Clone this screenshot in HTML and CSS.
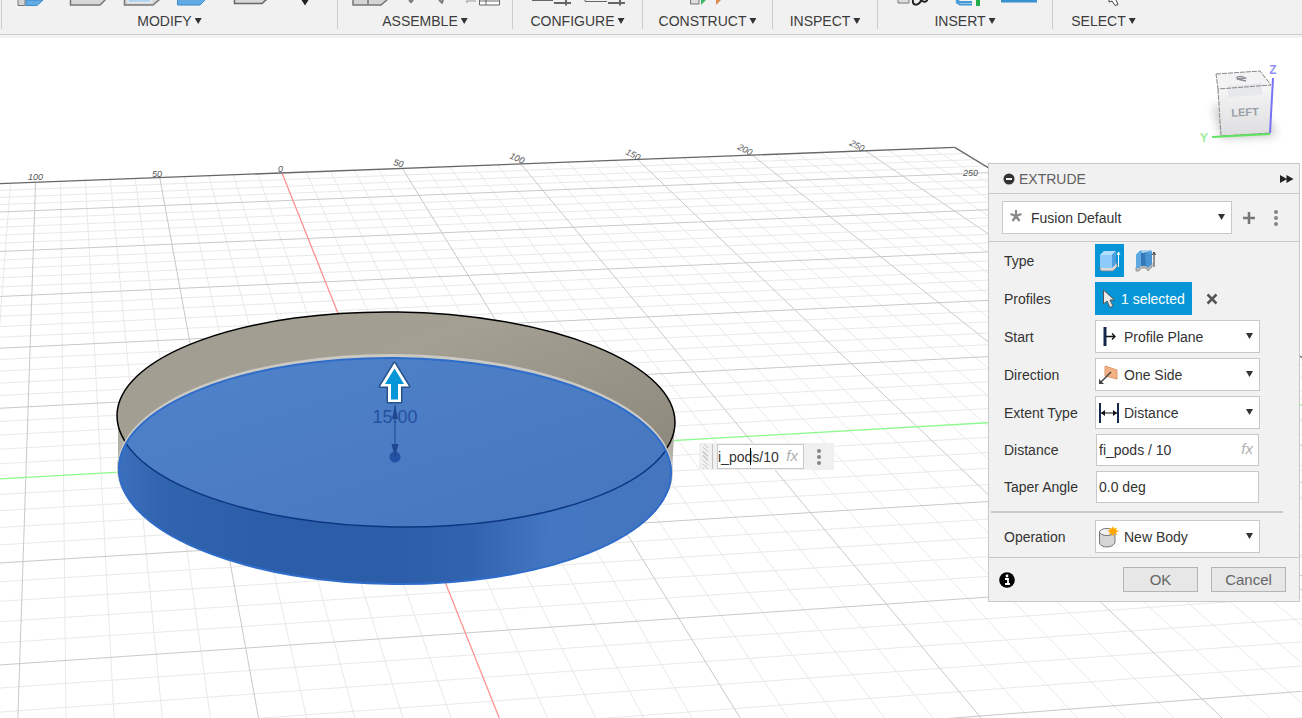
FILE: index.html
```html
<!DOCTYPE html>
<html lang="en">
<head>
    <meta charset="UTF-8">
    <meta name="viewport" content="width=device-width, initial-scale=1.0">
    <title>Extrude</title>
    <link rel="stylesheet" href="styles.css">
</head>
<body>

    <!-- Toolbar -->
    <header class="toolbar">
        <div class="tool-group">
            <svg class="tool-icons" width="335" height="7" viewBox="2 0 335 7">
                <path d="M18 0V5.500H25V0" fill="#d4d4d4" stroke="#777"/>
                <path d="M26 0V5.500H37L43 0Z" fill="#62abe3" stroke="#3b8ccb"/>
                <path d="M70.500 -1V5H100L106 -1" fill="#d8d8d8" stroke="#777" stroke-width="1.500"/>
                <path d="M124.500 -1V5H153L160 -1" fill="#d8d8d8" stroke="#777" stroke-width="1.500"/>
                <path d="M128 0H151V2H128Z" fill="#62abe3" stroke="#fff"/>
                <path d="M177.500 -1V5H200L206 -1" fill="#62abe3" stroke="#3b8ccb"/>
                <path d="M234.500 -1V3.500H262L267 -1" fill="#d8d8d8" stroke="#666" stroke-width="1.500"/>
                <path d="M301.500 0H308.500L305 5.500Z" fill="#222"/>
            </svg>
            <button class="tool-label">MODIFY <span class="caret"></span></button>
        </div>
        <div class="tool-group">
            <svg class="tool-icons" width="174" height="7" viewBox="338 0 174 7">
                <path d="M353 -1V5H381L388 -1M368 -1V5" fill="#d4d4d4" stroke="#777" stroke-width="1.500"/>
                <path d="M409 0L411 2L413 0M439 0L442 2.500L443 0" fill="none" stroke="#777" stroke-width="2"/>
                <path d="M466 1H476M467 1V3" stroke="#999" fill="none"/>
                <path d="M479.500 -1V5H499.500V-1M479 1H500M486 0V5" fill="#fff" stroke="#666"/>
            </svg>
            <button class="tool-label">ASSEMBLE <span class="caret"></span></button>
        </div>
        <div class="tool-group">
            <svg class="tool-icons" width="129" height="7" viewBox="513 0 129 7">
                <path d="M532 .500H553M585 -1V1.500H607" fill="none" stroke="#666"/>
                <path d="M554 3H571M566 0V5.500M608 3H625M620 0V5.500" stroke="#666" stroke-width="2"/>
            </svg>
            <button class="tool-label">CONFIGURE <span class="caret"></span></button>
        </div>
        <div class="tool-group">
            <svg class="tool-icons" width="129" height="7" viewBox="643 0 129 7">
                <path d="M690.500 -1V4H699V-1" fill="#ddd" stroke="#777"/>
                <path d="M701 5V0H706Z" fill="#3db665"/>
                <path d="M716 5V0H721Z" fill="#dd8b50"/>
            </svg>
            <button class="tool-label">CONSTRUCT <span class="caret"></span></button>
        </div>
        <div class="tool-group">
            <svg class="tool-icons" width="104" height="7" viewBox="773 0 104 7"></svg>
            <button class="tool-label">INSPECT <span class="caret"></span></button>
        </div>
        <div class="tool-group">
            <svg class="tool-icons" width="174" height="7" viewBox="878 0 174 7">
                <path d="M898 -1V3H909V-1" fill="#ddd" stroke="#777"/>
                <path d="M913 0C912 6 918 6 921 1M920 -1C924 4 928 1 927 -1" fill="none" stroke="#222" stroke-width="2"/>
                <path d="M956 0L960 2H972M956 2L960 4.500H972" fill="none" stroke="#4599d5" stroke-width="2"/>
                <path d="M976 0H980V6H976Z" fill="#22ad4a"/>
                <path d="M1001 0H1037V2.500H1001Z" fill="#3b92d1"/>
            </svg>
            <button class="tool-label">INSERT <span class="caret"></span></button>
        </div>
        <div class="tool-group last">
            <svg class="tool-icons" width="101" height="7" viewBox="1053 0 101 7">
                <path d="M1109 0V2L1112 1L1115 5.500L1118 4.500L1116 0" fill="#fff" stroke="#444"/>
            </svg>
            <button class="tool-label">SELECT <span class="caret"></span></button>
        </div>
    </header>

    <main class="workspace">

        <!-- 3D view -->
        <svg class="scene" viewBox="0 37 1302 681" preserveAspectRatio="xMinYMin slice">
            <defs>
                <linearGradient id="wall" x1="0" y1="0" x2="1" y2="1">
                    <stop offset="0" stop-color="#a09c90"/>
                    <stop offset=".35" stop-color="#a39f93"/>
                    <stop offset="1" stop-color="#858074"/>
                </linearGradient>
                <linearGradient id="side">
                    <stop offset="0" stop-color="#3c70bd"/>
                    <stop offset=".08" stop-color="#3164ae"/>
                    <stop offset=".28" stop-color="#2b5da8"/>
                    <stop offset=".5" stop-color="#2b5da8"/>
                    <stop offset=".64" stop-color="#3163b0"/>
                    <stop offset=".78" stop-color="#4477c2"/>
                    <stop offset="1" stop-color="#4475be"/>
                </linearGradient>
                <linearGradient id="top" x1="0" y1="0" x2="1" y2="1">
                    <stop offset="0" stop-color="#5083cb"/>
                    <stop offset="1" stop-color="#4676bd"/>
                </linearGradient>
                <linearGradient id="cube" x1="0" y1="0" x2="0" y2="1">
                    <stop offset="0" stop-color="#f6f6f7"/>
                    <stop offset="1" stop-color="#dedee0"/>
                </linearGradient>
                <filter id="soft" x="-30%" y="-30%" width="160%" height="160%">
                    <feGaussianBlur stdDeviation="5"/>
                </filter>
                <clipPath id="rim-clip"><ellipse cx="396" cy="420" rx="279" ry="107" transform="rotate(.8 396 420)"/></clipPath>
                <clipPath id="base-clip"><ellipse cx="395" cy="471" rx="277" ry="113" transform="rotate(.5 395 471)"/></clipPath>
                <clipPath id="upper-clip"><rect x="100" y="300" width="600" height="190"/></clipPath>
            </defs>

            <g id="grid"></g>

            <g class="ruler">
                <text x="28" y="180">100</text>
                <text x="152" y="177">50</text>
                <text x="278" y="172">0</text>
                <text transform="translate(393 165) rotate(14)">50</text>
                <text transform="translate(509 158) rotate(24)">100</text>
                <text transform="translate(625 154) rotate(26)">150</text>
                <text transform="translate(737 149) rotate(26)">200</text>
                <text transform="translate(849 145) rotate(26)">250</text>
                <text x="963" y="176">250</text>
            </g>

            <!-- Disc -->
            <path d="M118 420V471H672L675 420Z" fill="#b3b0a8"/>
            <ellipse cx="396" cy="419" rx="279" ry="107" transform="rotate(.8 396 419)" fill="url(#wall)" stroke="#000" stroke-width="1.500"/>
            <g clip-path="url(#upper-clip)">
                <ellipse cx="395" cy="470" rx="278" ry="116" transform="rotate(.5 395 470)" fill="#cbc9c4"/>
            </g>
            <ellipse cx="395" cy="471" rx="277" ry="113" transform="rotate(.5 395 471)" fill="url(#side)"/>
            <g clip-path="url(#base-clip)">
                <g clip-path="url(#rim-clip)">
                    <rect x="117" y="350" width="560" height="180" fill="url(#top)"/>
                </g>
                <ellipse cx="396" cy="420" rx="279" ry="107" transform="rotate(.8 396 420)" fill="none" stroke="#0c3681" stroke-width="1.500"/>
            </g>
            <ellipse cx="395" cy="471" rx="276" ry="113" transform="rotate(.5 395 471)" fill="none" stroke="#2f6dca" stroke-width="2"/>

            <!-- Distance manipulator -->
            <circle cx="395" cy="457" r="5.500" fill="#2450a5"/>
            <path d="M395 405V457" stroke="#234d97" stroke-width="1.200"/>
            <path d="M395 405L398 419H392ZM395 457L391.500 444H398.500Z" fill="#1e478f"/>
            <text class="dimension" x="395" y="423">15.00</text>
            <path d="M394.500 363L409 386.500H401V402H388V386.500H380Z" fill="#fff" stroke="#24508c" stroke-width="3" stroke-linejoin="round" paint-order="stroke"/>
            <path d="M394.500 368.500L404 384H398V399.500H391V384H385Z" fill="#0696d7"/>
        </svg>

        <!-- View cube -->
        <svg class="view-cube" width="90" height="90" viewBox="1195 60 90 90">
            <path d="M1213 105L1222 138L1276 136L1270 120Z" fill="#999" opacity=".55" filter="url(#soft)"/>
            <path d="M1216 74L1260 71L1271 85L1218 89Z" fill="#f3f3f4"/>
            <path d="M1217 88L1271 85L1270 133L1221 136Z" fill="url(#cube)"/>
            <path d="M1228 86L1262 83V95L1228 97Z" fill="#e6e8ec"/>
            <path d="M1216 74L1260 71L1271 85L1218 89ZM1218 89L1221 136L1270 133" fill="none" stroke="#888" stroke-dasharray="5 1"/>
            <path d="M1236 78Q1240 75 1245 78L1237 79L1246 81" fill="none" stroke="#8b8e94" stroke-width="1.500"/>
            <path d="M1212 137L1270 134" stroke="#5fe35f" stroke-width="2"/>
            <path d="M1273 78L1270 133" stroke="#7773f2" stroke-width="2"/>
            <text class="face" x="1245" y="116" transform="rotate(-3 1245 112)">LEFT</text>
            <text class="axis-y" x="1204" y="142">Y</text>
            <text class="axis-z" x="1273" y="74">Z</text>
        </svg>

        <!-- In-canvas input -->
        <div class="mini-input">
            <span class="grip"></span>
            <div class="mini-field">
                <input type="text" value="i_pods/10" aria-label="Distance value">
                <span class="text-cursor"></span>
                <span class="fx">fx</span>
            </div>
            <button class="dots" aria-label="More options"><i></i><i></i><i></i></button>
        </div>

        <!-- Extrude panel -->
        <form class="panel">
            <div class="panel-header">
                <svg width="12" height="12" viewBox="0 0 12 12"><circle cx="6" cy="6" r="5.500" fill="#333"/><path d="M3 6H9" stroke="#f1f1f1" stroke-width="2"/></svg>
                <h2>EXTRUDE</h2>
                <svg class="expand" width="14" height="8" viewBox="0 0 14 8"><path d="M0 0L7 4L0 8ZM6.500 0L13.500 4L6.500 8Z" fill="#222"/></svg>
            </div>

            <div class="preset">
                <div class="dropdown preset-dropdown">
                    <svg class="dropdown-icon" width="14" height="14" viewBox="0 0 14 14"><path d="M7 1V7M7 7L1.500 5M7 7L12.500 5M7 7L3.500 12M7 7L10.500 12" stroke="#888" stroke-width="2.200"/></svg>
                    <select aria-label="Preset"><option>Fusion Default</option></select>
                    <span class="caret"></span>
                </div>
                <button type="button" class="add" aria-label="Add preset">
                    <svg width="14" height="14" viewBox="0 0 14 14"><path d="M7 1V13M1 7H13" stroke="#777" stroke-width="2.500"/></svg>
                </button>
                <button type="button" class="dots" aria-label="Preset options"><i></i><i></i><i></i></button>
            </div>

            <div class="fields">
                <div class="field">
                    <span class="field-label">Type</span>
                    <button type="button" class="type-btn active" aria-label="Extrude">
                        <svg width="22" height="24" viewBox="0 0 22 24">
                            <path d="M1 17V21L3 22H14L18 18V14Z" fill="#d9d9d9" stroke="#6f7d88" stroke-width=".8"/>
                            <path d="M1 6L5 2H17L13 6V19H3Q1 19 1 17Z" fill="#8dcbfb"/>
                            <path d="M1 6L5 2H17L13 6Z" fill="#b4defe"/>
                            <path d="M13 6L17 2V15L13 19Z" fill="#4d9fe0"/>
                            <path d="M19.500 18V4M18 6L19.500 3L21 6" fill="none" stroke="#fff"/>
                        </svg>
                    </button>
                    <button type="button" class="type-btn" aria-label="Thin extrude">
                        <svg width="22" height="24" viewBox="0 0 22 24">
                            <path d="M1 18V22H4L6 19H11L13 22L17 18V14" fill="#bbb" stroke="#888" stroke-width=".8"/>
                            <path d="M1 6L5 2H7V16L4 19H1Z" fill="#5ea9e2"/>
                            <path d="M6 4L13 3V17H6Z" fill="#3379ba"/>
                            <path d="M10 5L14 2H17V15L13 19L11 17Z" fill="#4b94d3"/>
                            <path d="M1 6L5 2H17L14 5" fill="none" stroke="#65b3ec"/>
                            <path d="M19 18V4M17.500 6L19 3L20.500 6" fill="none" stroke="#333"/>
                        </svg>
                    </button>
                </div>
                <div class="field">
                    <span class="field-label">Profiles</span>
                    <button type="button" class="selected-btn">
                        <svg width="14" height="20" viewBox="0 0 14 20"><path d="M1.500 1V15L5 12L8 18.500L11 17L8 11H12.500Z" fill="#e8e8e8" stroke="#555"/></svg>
                        1 selected
                    </button>
                    <button type="button" class="clear-btn" aria-label="Clear selection">
                        <svg width="12" height="12" viewBox="0 0 12 12"><path d="M1.500 1.500L10.500 10.500M10.500 1.500L1.500 10.500" stroke="#555" stroke-width="2.500"/></svg>
                    </button>
                </div>
                <div class="field">
                    <label class="field-label" for="start">Start</label>
                    <div class="dropdown">
                        <svg class="dropdown-icon" width="22" height="22" viewBox="0 0 22 22"><path d="M7 1V20" stroke="#14284b" stroke-width="3"/><path d="M8 10.500H17M14 7.500L17 10.500L14 13.500" fill="none" stroke="#111" stroke-width="1.300"/></svg>
                        <select id="start"><option>Profile Plane</option></select>
                        <span class="caret"></span>
                    </div>
                </div>
                <div class="field">
                    <label class="field-label" for="direction">Direction</label>
                    <div class="dropdown">
                        <svg class="dropdown-icon" width="22" height="22" viewBox="0 0 22 22"><path d="M7 2L19 6V15L7 12Z" fill="#f4b183" stroke="#dc996b"/><path d="M13 8L2 19" stroke="#444" stroke-width="1.500"/><path d="M1 20V15L6 20Z" fill="#444"/></svg>
                        <select id="direction"><option>One Side</option></select>
                        <span class="caret"></span>
                    </div>
                </div>
                <div class="field">
                    <label class="field-label" for="extent">Extent Type</label>
                    <div class="dropdown">
                        <svg class="dropdown-icon" width="22" height="22" viewBox="0 0 22 22"><path d="M2 1V21M20 1V21" stroke="#14284b" stroke-width="2"/><path d="M3 11H19" stroke="#111"/><path d="M3 11L7 8V14ZM19 11L15 8V14Z" fill="#111"/></svg>
                        <select id="extent"><option>Distance</option></select>
                        <span class="caret"></span>
                    </div>
                </div>
                <div class="field">
                    <label class="field-label" for="distance">Distance</label>
                    <div class="text-field">
                        <input type="text" id="distance" value="fi_pods / 10">
                        <span class="fx">fx</span>
                    </div>
                </div>
                <div class="field">
                    <label class="field-label" for="taper">Taper Angle</label>
                    <div class="text-field">
                        <input type="text" id="taper" value="0.0 deg">
                    </div>
                </div>
                <hr>
                <div class="field">
                    <label class="field-label" for="operation">Operation</label>
                    <div class="dropdown">
                        <svg class="dropdown-icon" width="22" height="22" viewBox="0 0 22 22">
                            <path d="M1.500 6V17Q3 21 9 21Q15 21 17 17V6Z" fill="#d5d5d5" stroke="#777"/>
                            <ellipse cx="9" cy="6" rx="7.500" ry="3.500" fill="#f3f3f3" stroke="#777"/>
                            <path d="M15 0L16.200 2.800L19 1.500L18 4L21 5L18 6.200L19.300 9L16.200 7.800L15 10.500L13.800 7.800L11 9L12 6.200L9 5L12 4L11 1.500L13.800 2.800Z" fill="#ffa800"/>
                        </svg>
                        <select id="operation"><option>New Body</option></select>
                        <span class="caret"></span>
                    </div>
                </div>
            </div>

            <div class="panel-footer">
                <svg class="info" width="16" height="16" viewBox="0 0 16 16"><circle cx="8" cy="8" r="7.800" fill="#000"/><path d="M6 7H9V11.500M6 12H11" fill="none" stroke="#fff" stroke-width="1.800"/><circle cx="8" cy="4" r="1.400" fill="#fff"/></svg>
                <button type="button" class="action">OK</button>
                <button type="button" class="action">Cancel</button>
            </div>
        </form>
    </main>

    <script>
        const grid = document.getElementById("grid");
        const EDGE = 5.8;   // grid ends 5.8 major cells from the origin
        const NEAR = -4.4;

        // Project a point on the ground plane to the view
        function project(u, w) {
            const d = 0.0118 * u + 0.0857 * w + 1;
            return [
                (184.9 * u + 4.69 * w + 395) / d,
                (-4.85 * u - 34.05 * w + 456.4) / d
            ];
        }

        function addLine(from, to, className) {
            const line = document.createElementNS("http://www.w3.org/2000/svg", "line");
            line.setAttribute("x1", from[0]);
            line.setAttribute("y1", from[1]);
            line.setAttribute("x2", to[0]);
            line.setAttribute("y2", to[1]);
            line.setAttribute("class", className);
            grid.appendChild(line);
        }

        function lineClass(step) {
            return step % 5 === 0 ? "major" : "minor";
        }

        for (const type of ["minor", "major"]) {
            for (let i = -22; i < 29; i++) {
                if (lineClass(i) !== type || i === 0) continue;
                addLine(project(i / 5, NEAR), project(i / 5, EDGE), type);
                addLine(project(-4.4, i / 5), project(EDGE, i / 5), type);
            }
        }

        addLine(project(-4.4, 0), project(EDGE, 0), "axis-green");
        addLine(project(0, NEAR), project(0, EDGE), "axis-red");
        addLine(project(-4.4, EDGE), project(EDGE, EDGE), "edge");
        addLine(project(EDGE, NEAR), project(EDGE, EDGE), "edge");
    </script>

</body>
</html>
```
FILE: styles.css
```css
/* General Reset */
* {
    margin: 0;
    padding: 0;
    box-sizing: border-box;
}

body {
    font-family: "Liberation Sans", Arial, sans-serif;
    font-size: 14px;
    color: #333;
    background-color: #ffffff;
    height: 100vh;
    display: flex;
    flex-direction: column;
    overflow: hidden;
}

button, input, select {
    font: inherit;
    color: inherit;
}

button {
    border: none;
    background: none;
    cursor: pointer;
}

/* Toolbar */
.toolbar {
    display: flex;
    height: 38px;
    padding-left: 1px;
    background-color: #f1f1f1;
    border-bottom: 3px solid #f4f4f4;
    box-shadow: inset 0 -1px 0 #cccccc;
    flex-shrink: 0;
}

.tool-group {
    display: flex;
    flex-direction: column;
    align-items: center;
    height: 29px;
    border-right: 1px solid #cccccc;
}

.tool-group:first-child {
    border-left: 1px solid #cccccc;
}

.tool-group.last {
    border-right: none;
}

.tool-icons {
    display: block;
    flex-shrink: 0;
}

.tool-label {
    display: flex;
    align-items: center;
    flex-shrink: 0;
    gap: 3px;
    height: 28px;
    color: #3c3c3c;
}

.caret {
    width: 7px;
    height: 6px;
    background-color: #333;
    clip-path: polygon(0 0, 100% 0, 50% 100%);
}

/* Workspace */
.workspace {
    position: relative;
    flex: 1;
    min-height: 0;
    margin-top: -1px;
    z-index: -1;
}

.scene {
    display: block;
    width: 100%;
    height: 100%;
}

.minor {
    stroke: #e9e9e9;
}

.major {
    stroke: #c9c9c9;
}

.edge {
    stroke: #666;
    stroke-width: 1.3px;
}

.axis-red {
    stroke: #ff9090;
    stroke-width: 1.3px;
}

.axis-green {
    stroke: #8dfa8d;
    stroke-width: 1.3px;
}

.ruler text {
    font-size: 9px;
    font-style: italic;
    fill: #555;
}

.dimension {
    font-size: 18px;
    text-anchor: middle;
    fill: #2450a0;
}

/* View Cube */
.view-cube {
    position: absolute;
    top: 23px;
    right: 17px;
}

.view-cube text {
    font-size: 12px;
    font-weight: bold;
    text-anchor: middle;
}

.view-cube .face {
    font-size: 11px;
    fill: #9a9da3;
}

.axis-y {
    fill: #98ef98;
}

.axis-z {
    fill: #9490f4;
}

/* In-canvas Input */
.mini-input {
    position: absolute;
    left: 699px;
    top: 406px;
    display: flex;
    align-items: center;
    width: 135px;
    height: 27px;
    padding-left: 4px;
    background-color: #f0f0f0;
}

.grip {
    width: 10px;
    height: 25px;
    margin-right: 4px;
    border-right: 1px solid #c4c4c4;
    background: repeating-linear-gradient(45deg, #c8c8c8 0 1px, #f0f0f0 1px 3px) left / 5px 100% no-repeat;
}

.mini-field {
    position: relative;
    width: 87px;
}

.mini-field input {
    display: block;
    width: 100%;
    height: 25px;
    border: 1px solid #c8c8c8;
    background-color: #ffffff;
}

.text-cursor {
    position: absolute;
    left: 33px;
    top: 4px;
    width: 1px;
    height: 17px;
    background-color: #000;
}

.fx {
    position: absolute;
    right: 6px;
    top: 3px;
    font-size: 15px;
    font-style: italic;
    color: #b0b0b0;
}

.dots {
    display: flex;
    flex-direction: column;
    align-items: center;
    gap: 2px;
    width: 30px;
}

.dots i {
    width: 4px;
    height: 4px;
    border-radius: 50%;
    background-color: #858585;
}

/* Extrude Panel */
.panel {
    position: absolute;
    top: 126px;
    right: 2px;
    width: 312px;
    background-color: #f1f1f1;
    border: 1px solid #c8c8c8;
}

.panel-header {
    display: flex;
    align-items: center;
    gap: 4px;
    height: 30px;
    padding: 0 5px 0 14px;
    border-bottom: 1px solid #c8c8c8;
}

.panel-header h2 {
    flex: 1;
    font-size: 14px;
    font-weight: normal;
    color: #606060;
}

.preset {
    display: flex;
    align-items: center;
    height: 48px;
    padding-left: 13px;
    border-bottom: 1px solid #c8c8c8;
}

.dropdown {
    position: relative;
    width: 165px;
}

.preset-dropdown {
    width: 230px;
}

.dropdown select {
    appearance: none;
    display: block;
    width: 100%;
    height: 33px;
    padding-left: 28px;
    border: 1px solid #c8c8c8;
    border-radius: 0;
    background-color: #ffffff;
}

.dropdown-icon {
    position: absolute;
    left: 3px;
    top: 6px;
}

.preset-dropdown .dropdown-icon {
    left: 7px;
    top: 8px;
}

.dropdown .caret {
    position: absolute;
    right: 7px;
    top: 13px;
}

.add {
    display: flex;
    justify-content: center;
    width: 34px;
}

.preset .dots {
    width: 20px;
}

/* Fields */
.fields {
    display: flex;
    flex-direction: column;
    gap: 5px;
    padding: 2px 0 4px;
}

.field {
    display: flex;
    align-items: center;
    padding-left: 15px;
}

.field-label {
    width: 91px;
}

.type-btn {
    display: flex;
    align-items: center;
    justify-content: center;
    width: 29px;
    height: 33px;
    margin-right: 7px;
}

.type-btn.active {
    background-color: #0696d7;
}

.selected-btn {
    display: flex;
    align-items: center;
    gap: 5px;
    height: 33px;
    padding: 0 7px;
    background-color: #0696d7;
    color: #ffffff;
}

.clear-btn {
    display: flex;
    padding: 0 14px;
}

.text-field {
    position: relative;
    width: 163px;
    margin-left: 1px;
}

.text-field input {
    display: block;
    width: 100%;
    height: 32px;
    padding-left: 2px;
    border: 1px solid #c8c8c8;
    background-color: #ffffff;
}

.text-field .fx {
    top: 6px;
}

hr {
    height: 2px;
    margin: 3px 16px 2px 2px;
    border: none;
    background-color: #c8c8c8;
}

/* Footer */
.panel-footer {
    display: flex;
    align-items: center;
    gap: 13px;
    height: 44px;
    padding: 0 13px 0 10px;
    border-top: 1px solid #c8c8c8;
}

.info {
    margin-right: auto;
}

.action {
    width: 75px;
    height: 25px;
    border: 1px solid #b4b4b4;
    background-color: #e7e7e7;
    font-size: 15px;
    color: #666;
}
```
